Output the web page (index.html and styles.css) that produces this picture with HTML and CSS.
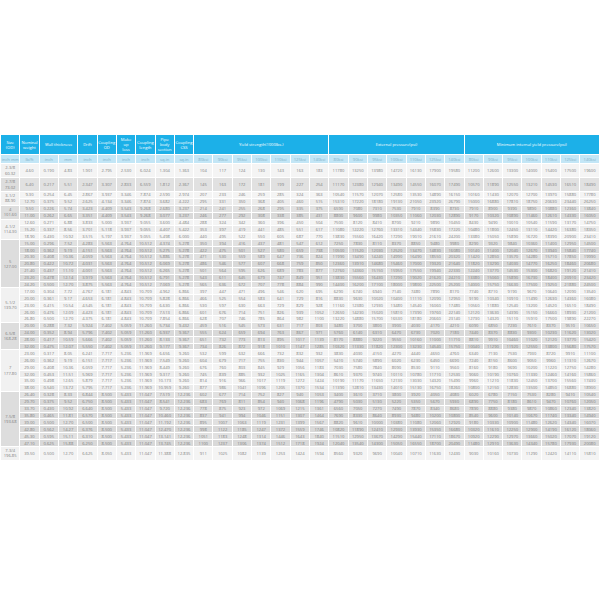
FILE: index.html
```html
<!DOCTYPE html>
<html lang="en">
<head>
<meta charset="utf-8">
<title>Tubing and casing specification</title>
<link rel="stylesheet" href="styles.css">
</head>
<body>
<div class="page">
<table class="spec">
<colgroup><col span="31"></colgroup>
<thead>
<tr class="h1">
<th>Size<br>(OD)</th><th>Nominal<br>weight</th><th colspan="2">Wall thickness</th><th>Drift</th><th>Coupling<br>OD</th><th>Make<br>up<br>loss</th><th>Coupling<br>length</th><th>Pipe<br>body<br>section</th><th>Coupling<br>CSS</th><th colspan="7">Yield strength(1000lbs.)</th><th colspan="7">External pressure(psi)</th><th colspan="7">Minimum internal yield pressure(psi)</th>
</tr>
<tr class="h2">
<th>inch mm</th><th>lb/ft</th><th>inch</th><th>mm</th><th>inch</th><th>inch</th><th>inch</th><th>inch</th><th>sq.in</th><th>sq.in</th><th>80ksi</th><th>90ksi</th><th>95ksi</th><th>100ksi</th><th>110ksi</th><th>125ksi</th><th>140ksi</th><th>80ksi</th><th>90ksi</th><th>95ksi</th><th>100ksi</th><th>110ksi</th><th>125ksi</th><th>140ksi</th><th>80ksi</th><th>90ksi</th><th>95ksi</th><th>100ksi</th><th>110ksi</th><th>125ksi</th><th>140ksi</th>
</tr>
</thead>
<tbody class="ga">
<tr class="tall"><td class="size">2-3/8<br>60.32</td><td>4.60</td><td>0.190</td><td>4.83</td><td>1.901</td><td>2.795</td><td>2.530</td><td>6.024</td><td>1.304</td><td>1.363</td><td>104</td><td>117</td><td>124</td><td>130</td><td>143</td><td>163</td><td>183</td><td>11780</td><td>13250</td><td>13980</td><td>14720</td><td>16130</td><td>17900</td><td>19580</td><td>11200</td><td>12600</td><td>13300</td><td>14000</td><td>15400</td><td>17500</td><td>19600</td></tr>
</tbody>
<tbody class="gb">
<tr class="tall"><td class="size">2-7/8<br>73.02</td><td>6.40</td><td>0.217</td><td>5.51</td><td>2.347</td><td>3.307</td><td>2.833</td><td>6.559</td><td>1.812</td><td>2.367</td><td>145</td><td>163</td><td>172</td><td>181</td><td>199</td><td>227</td><td>254</td><td>11170</td><td>12380</td><td>12940</td><td>13490</td><td>14550</td><td>16070</td><td>17490</td><td>10570</td><td>11890</td><td>12550</td><td>13210</td><td>14530</td><td>16510</td><td>18490</td></tr>
</tbody>
<tbody class="ga">
<tr><td class="size" rowspan="2">3-1/2<br>88.90</td><td>9.30</td><td>0.254</td><td>6.45</td><td>2.867</td><td>3.937</td><td>3.346</td><td>7.874</td><td>2.590</td><td>2.974</td><td>207</td><td>233</td><td>246</td><td>259</td><td>285</td><td>324</td><td>363</td><td>10540</td><td>11570</td><td>12070</td><td>12580</td><td>13530</td><td>14890</td><td>16150</td><td>10160</td><td>11430</td><td>12070</td><td>12700</td><td>13970</td><td>15880</td><td>17780</td></tr>
<tr><td>12.70</td><td>0.375</td><td>9.52</td><td>2.625</td><td>4.134</td><td>3.346</td><td>7.874</td><td>3.682</td><td>4.222</td><td>295</td><td>331</td><td>350</td><td>368</td><td>405</td><td>460</td><td>515</td><td>15310</td><td>17220</td><td>18180</td><td>19130</td><td>21050</td><td>23920</td><td>26790</td><td>15000</td><td>16880</td><td>17810</td><td>18750</td><td>20630</td><td>23440</td><td>26250</td></tr>
</tbody>
<tbody class="gb">
<tr><td class="size" rowspan="2">4<br>101.60</td><td>9.50</td><td>0.226</td><td>5.74</td><td>3.423</td><td>4.409</td><td>3.543</td><td>9.268</td><td>2.680</td><td>3.237</td><td>214</td><td>241</td><td>255</td><td>268</td><td>295</td><td>335</td><td>375</td><td>6590</td><td>7080</td><td>7310</td><td>7530</td><td>7910</td><td>8390</td><td>8730</td><td>7910</td><td>8900</td><td>9390</td><td>9890</td><td>10880</td><td>12360</td><td>13840</td></tr>
<tr><td>11.00</td><td>0.262</td><td>6.65</td><td>3.351</td><td>4.409</td><td>3.543</td><td>9.268</td><td>3.077</td><td>3.237</td><td>246</td><td>277</td><td>292</td><td>308</td><td>338</td><td>385</td><td>431</td><td>8800</td><td>9600</td><td>9980</td><td>10350</td><td>11060</td><td>12030</td><td>12890</td><td>9170</td><td>10320</td><td>10890</td><td>11460</td><td>12610</td><td>14330</td><td>16050</td></tr>
</tbody>
<tbody class="ga">
<tr><td class="size" rowspan="3">4-1/2<br>114.30</td><td>12.60</td><td>0.271</td><td>6.88</td><td>3.833</td><td>5.000</td><td>3.937</td><td>9.055</td><td>3.600</td><td>4.484</td><td>288</td><td>324</td><td>342</td><td>360</td><td>396</td><td>450</td><td>504</td><td>7500</td><td>8120</td><td>8410</td><td>8700</td><td>9210</td><td>9890</td><td>10450</td><td>8430</td><td>9490</td><td>10010</td><td>10540</td><td>11590</td><td>13170</td><td>14750</td></tr>
<tr><td>15.20</td><td>0.337</td><td>8.56</td><td>3.701</td><td>5.118</td><td>3.937</td><td>9.055</td><td>4.407</td><td>5.422</td><td>353</td><td>397</td><td>419</td><td>441</td><td>485</td><td>551</td><td>617</td><td>11080</td><td>12220</td><td>12760</td><td>13310</td><td>14340</td><td>15830</td><td>17220</td><td>10480</td><td>11800</td><td>12450</td><td>13110</td><td>14420</td><td>16380</td><td>18350</td></tr>
<tr><td>18.90</td><td>0.430</td><td>10.92</td><td>3.515</td><td>5.197</td><td>3.937</td><td>9.055</td><td>5.498</td><td>6.000</td><td>440</td><td>495</td><td>522</td><td>550</td><td>605</td><td>687</td><td>770</td><td>13830</td><td>15560</td><td>16420</td><td>17290</td><td>19010</td><td>21610</td><td>24200</td><td>13380</td><td>15050</td><td>15890</td><td>16720</td><td>18390</td><td>20900</td><td>23410</td></tr>
</tbody>
<tbody class="gb">
<tr><td class="size" rowspan="7">5<br>127.00</td><td>15.00</td><td>0.296</td><td>7.52</td><td>4.283</td><td>5.563</td><td>4.764</td><td>10.512</td><td>4.374</td><td>5.278</td><td>350</td><td>394</td><td>416</td><td>437</td><td>481</td><td>547</td><td>612</td><td>7250</td><td>7830</td><td>8110</td><td>8370</td><td>8850</td><td>9480</td><td>9980</td><td>8290</td><td>9320</td><td>9840</td><td>10360</td><td>11400</td><td>12950</td><td>14500</td></tr>
<tr><td>18.00</td><td>0.362</td><td>9.19</td><td>4.151</td><td>5.563</td><td>4.764</td><td>10.512</td><td>5.275</td><td>5.278</td><td>422</td><td>475</td><td>501</td><td>527</td><td>580</td><td>659</td><td>738</td><td>10500</td><td>11520</td><td>12030</td><td>12520</td><td>13470</td><td>14830</td><td>16080</td><td>10140</td><td>11400</td><td>12040</td><td>12670</td><td>13940</td><td>15840</td><td>17740</td></tr>
<tr><td>20.30</td><td>0.408</td><td>10.36</td><td>4.059</td><td>5.563</td><td>4.764</td><td>10.512</td><td>5.886</td><td>5.278</td><td>471</td><td>530</td><td>559</td><td>589</td><td>647</td><td>736</td><td>824</td><td>11990</td><td>13490</td><td>14240</td><td>14990</td><td>16490</td><td>18550</td><td>20320</td><td>11420</td><td>12850</td><td>13570</td><td>14280</td><td>15710</td><td>17850</td><td>19990</td></tr>
<tr><td>20.80</td><td>0.422</td><td>10.72</td><td>4.031</td><td>5.563</td><td>4.764</td><td>10.512</td><td>6.069</td><td>5.278</td><td>486</td><td>546</td><td>577</td><td>607</td><td>668</td><td>759</td><td>850</td><td>12360</td><td>13910</td><td>14680</td><td>15460</td><td>17000</td><td>19320</td><td>21640</td><td>11820</td><td>13290</td><td>14030</td><td>14770</td><td>16250</td><td>18460</td><td>20680</td></tr>
<tr><td>21.40</td><td>0.437</td><td>11.10</td><td>4.001</td><td>5.563</td><td>4.764</td><td>10.512</td><td>6.265</td><td>5.278</td><td>501</td><td>564</td><td>595</td><td>626</td><td>689</td><td>783</td><td>877</td><td>12760</td><td>14360</td><td>15150</td><td>15950</td><td>17550</td><td>19940</td><td>22330</td><td>12240</td><td>13770</td><td>14530</td><td>15300</td><td>16820</td><td>19120</td><td>21410</td></tr>
<tr><td>23.20</td><td>0.478</td><td>12.14</td><td>3.919</td><td>5.563</td><td>4.764</td><td>10.512</td><td>6.791</td><td>5.278</td><td>543</td><td>611</td><td>645</td><td>679</td><td>747</td><td>849</td><td>951</td><td>13830</td><td>15560</td><td>16430</td><td>17290</td><td>19020</td><td>21620</td><td>24210</td><td>13380</td><td>15060</td><td>15890</td><td>16730</td><td>18400</td><td>20910</td><td>23420</td></tr>
<tr><td>24.20</td><td>0.500</td><td>12.70</td><td>3.875</td><td>5.563</td><td>4.764</td><td>10.512</td><td>7.069</td><td>5.278</td><td>565</td><td>636</td><td>672</td><td>707</td><td>778</td><td>884</td><td>990</td><td>14400</td><td>16200</td><td>17100</td><td>18000</td><td>19800</td><td>22500</td><td>25200</td><td>14000</td><td>15750</td><td>16630</td><td>17500</td><td>19250</td><td>21880</td><td>24500</td></tr>
</tbody>
<tbody class="ga">
<tr><td class="size" rowspan="5">5-1/2<br>139.70</td><td>17.00</td><td>0.304</td><td>7.72</td><td>4.767</td><td>6.181</td><td>4.843</td><td>10.709</td><td>4.962</td><td>6.866</td><td>397</td><td>447</td><td>471</td><td>496</td><td>546</td><td>620</td><td>695</td><td>6290</td><td>6740</td><td>6940</td><td>7140</td><td>7480</td><td>7890</td><td>8170</td><td>7740</td><td>8710</td><td>9190</td><td>9670</td><td>10640</td><td>12090</td><td>13540</td></tr>
<tr><td>20.00</td><td>0.361</td><td>9.17</td><td>4.653</td><td>6.181</td><td>4.843</td><td>10.709</td><td>5.828</td><td>6.866</td><td>466</td><td>525</td><td>554</td><td>583</td><td>641</td><td>729</td><td>816</td><td>8830</td><td>9630</td><td>10020</td><td>10400</td><td>11110</td><td>12090</td><td>12950</td><td>9190</td><td>10340</td><td>10910</td><td>11490</td><td>12630</td><td>14360</td><td>16080</td></tr>
<tr><td>23.00</td><td>0.415</td><td>10.54</td><td>4.545</td><td>6.181</td><td>4.843</td><td>10.709</td><td>6.630</td><td>6.866</td><td>530</td><td>597</td><td>630</td><td>663</td><td>729</td><td>829</td><td>928</td><td>11160</td><td>12380</td><td>12930</td><td>13480</td><td>14540</td><td>16060</td><td>17480</td><td>10560</td><td>11880</td><td>12540</td><td>13200</td><td>14520</td><td>16510</td><td>18490</td></tr>
<tr><td>26.00</td><td>0.476</td><td>12.09</td><td>4.423</td><td>6.181</td><td>4.843</td><td>10.709</td><td>7.513</td><td>6.866</td><td>601</td><td>676</td><td>714</td><td>751</td><td>826</td><td>939</td><td>1052</td><td>12650</td><td>14230</td><td>15020</td><td>15810</td><td>17390</td><td>19760</td><td>22140</td><td>12120</td><td>13630</td><td>14390</td><td>15150</td><td>16660</td><td>18930</td><td>21200</td></tr>
<tr><td>26.80</td><td>0.500</td><td>12.70</td><td>4.375</td><td>6.181</td><td>4.843</td><td>10.709</td><td>7.854</td><td>6.866</td><td>628</td><td>707</td><td>746</td><td>785</td><td>864</td><td>982</td><td>1100</td><td>13220</td><td>14880</td><td>15700</td><td>16530</td><td>18180</td><td>20660</td><td>23140</td><td>12730</td><td>14320</td><td>15110</td><td>15910</td><td>17500</td><td>19890</td><td>22270</td></tr>
</tbody>
<tbody class="gb">
<tr><td class="size" rowspan="4">6-5/8<br>168.28</td><td>20.00</td><td>0.288</td><td>7.32</td><td>5.924</td><td>7.402</td><td>5.059</td><td>11.260</td><td>5.734</td><td>9.432</td><td>459</td><td>516</td><td>545</td><td>573</td><td>631</td><td>717</td><td>803</td><td>3480</td><td>3700</td><td>3800</td><td>3900</td><td>4030</td><td>4170</td><td>4210</td><td>6090</td><td>6850</td><td>7230</td><td>7610</td><td>8370</td><td>9510</td><td>10650</td></tr>
<tr><td>24.00</td><td>0.352</td><td>8.94</td><td>5.796</td><td>7.402</td><td>5.059</td><td>11.260</td><td>6.937</td><td>9.367</td><td>555</td><td>624</td><td>659</td><td>694</td><td>763</td><td>867</td><td>971</td><td>5760</td><td>6140</td><td>6310</td><td>6470</td><td>6730</td><td>7020</td><td>7180</td><td>7440</td><td>8370</td><td>8830</td><td>9300</td><td>10230</td><td>11620</td><td>13020</td></tr>
<tr><td>28.00</td><td>0.417</td><td>10.59</td><td>5.666</td><td>7.402</td><td>5.059</td><td>11.260</td><td>8.133</td><td>9.367</td><td>651</td><td>732</td><td>773</td><td>813</td><td>895</td><td>1017</td><td>1139</td><td>8170</td><td>8880</td><td>9220</td><td>9550</td><td>10160</td><td>11000</td><td>11710</td><td>8810</td><td>9910</td><td>10460</td><td>11020</td><td>12120</td><td>13770</td><td>15420</td></tr>
<tr><td>32.00</td><td>0.475</td><td>12.07</td><td>5.550</td><td>7.402</td><td>5.059</td><td>11.260</td><td>9.177</td><td>9.367</td><td>734</td><td>826</td><td>872</td><td>918</td><td>1010</td><td>1147</td><td>1285</td><td>10320</td><td>11330</td><td>11820</td><td>12300</td><td>13230</td><td>14540</td><td>15750</td><td>10040</td><td>11290</td><td>11920</td><td>12550</td><td>13800</td><td>15680</td><td>17570</td></tr>
</tbody>
<tbody class="ga">
<tr><td class="size" rowspan="6">7<br>177.80</td><td>23.00</td><td>0.317</td><td>8.05</td><td>6.241</td><td>7.717</td><td>5.236</td><td>11.969</td><td>6.656</td><td>9.260</td><td>532</td><td>599</td><td>632</td><td>666</td><td>732</td><td>832</td><td>932</td><td>3830</td><td>4030</td><td>4150</td><td>4270</td><td>4440</td><td>4650</td><td>4760</td><td>6340</td><td>7130</td><td>7530</td><td>7930</td><td>8720</td><td>9910</td><td>11100</td></tr>
<tr><td>26.00</td><td>0.362</td><td>9.19</td><td>6.151</td><td>7.717</td><td>5.236</td><td>11.969</td><td>7.549</td><td>9.260</td><td>604</td><td>679</td><td>717</td><td>755</td><td>830</td><td>944</td><td>1057</td><td>5410</td><td>5740</td><td>5890</td><td>6020</td><td>6230</td><td>6450</td><td>6690</td><td>7240</td><td>8150</td><td>8600</td><td>9050</td><td>9960</td><td>11310</td><td>12670</td></tr>
<tr><td>29.00</td><td>0.408</td><td>10.36</td><td>6.059</td><td>7.717</td><td>5.236</td><td>11.969</td><td>8.449</td><td>9.260</td><td>676</td><td>760</td><td>803</td><td>845</td><td>929</td><td>1056</td><td>1183</td><td>7030</td><td>7580</td><td>7840</td><td>8090</td><td>8530</td><td>9110</td><td>9560</td><td>8160</td><td>9180</td><td>9690</td><td>10200</td><td>11220</td><td>12750</td><td>14280</td></tr>
<tr><td>32.00</td><td>0.453</td><td>11.51</td><td>5.969</td><td>7.717</td><td>5.236</td><td>11.969</td><td>9.317</td><td>9.260</td><td>745</td><td>839</td><td>885</td><td>932</td><td>1025</td><td>1165</td><td>1304</td><td>8610</td><td>9370</td><td>9740</td><td>10110</td><td>10780</td><td>11710</td><td>12530</td><td>9060</td><td>10190</td><td>10760</td><td>11330</td><td>12460</td><td>14160</td><td>15860</td></tr>
<tr><td>35.00</td><td>0.498</td><td>12.65</td><td>5.879</td><td>7.717</td><td>5.236</td><td>11.969</td><td>10.173</td><td>9.260</td><td>814</td><td>916</td><td>966</td><td>1017</td><td>1119</td><td>1272</td><td>1424</td><td>10190</td><td>11170</td><td>11650</td><td>12130</td><td>13030</td><td>14320</td><td>15490</td><td>9960</td><td>11210</td><td>11830</td><td>12450</td><td>13700</td><td>15560</td><td>17430</td></tr>
<tr><td>38.00</td><td>0.540</td><td>13.72</td><td>5.795</td><td>7.717</td><td>5.236</td><td>11.969</td><td>10.959</td><td>9.260</td><td>877</td><td>986</td><td>1041</td><td>1096</td><td>1205</td><td>1370</td><td>1534</td><td>11390</td><td>12810</td><td>13430</td><td>14010</td><td>15130</td><td>16750</td><td>18260</td><td>10800</td><td>12150</td><td>12830</td><td>13500</td><td>14850</td><td>16880</td><td>18900</td></tr>
</tbody>
<tbody class="gb">
<tr><td class="size" rowspan="8">7-5/8<br>193.68</td><td>26.40</td><td>0.328</td><td>8.33</td><td>6.844</td><td>8.500</td><td>5.433</td><td>11.047</td><td>7.519</td><td>12.236</td><td>602</td><td>677</td><td>714</td><td>752</td><td>827</td><td>940</td><td>1053</td><td>3400</td><td>3610</td><td>3710</td><td>3800</td><td>3920</td><td>4050</td><td>4080</td><td>6020</td><td>6780</td><td>7150</td><td>7530</td><td>8280</td><td>9410</td><td>10540</td></tr>
<tr><td>29.70</td><td>0.375</td><td>9.52</td><td>6.750</td><td>8.500</td><td>5.433</td><td>11.047</td><td>8.541</td><td>12.236</td><td>683</td><td>769</td><td>811</td><td>854</td><td>940</td><td>1068</td><td>1196</td><td>4790</td><td>5030</td><td>5130</td><td>5220</td><td>5350</td><td>5670</td><td>5930</td><td>6890</td><td>7750</td><td>8180</td><td>8610</td><td>9470</td><td>10760</td><td>12050</td></tr>
<tr><td>33.70</td><td>0.430</td><td>10.92</td><td>6.640</td><td>8.500</td><td>5.433</td><td>11.047</td><td>9.720</td><td>12.236</td><td>778</td><td>875</td><td>923</td><td>972</td><td>1069</td><td>1215</td><td>1361</td><td>6560</td><td>7050</td><td>7270</td><td>7490</td><td>7870</td><td>8340</td><td>8680</td><td>7890</td><td>8880</td><td>9380</td><td>9870</td><td>10860</td><td>12340</td><td>13820</td></tr>
<tr><td>35.80</td><td>0.465</td><td>11.81</td><td>6.570</td><td>8.500</td><td>5.433</td><td>11.047</td><td>10.460</td><td>12.236</td><td>837</td><td>941</td><td>994</td><td>1046</td><td>1151</td><td>1307</td><td>1464</td><td>7690</td><td>8330</td><td>8640</td><td>8930</td><td>9480</td><td>10200</td><td>10800</td><td>8540</td><td>9600</td><td>10140</td><td>10670</td><td>11740</td><td>13340</td><td>14940</td></tr>
<tr><td>39.00</td><td>0.500</td><td>12.70</td><td>6.500</td><td>8.500</td><td>5.433</td><td>11.047</td><td>11.192</td><td>12.236</td><td>895</td><td>1007</td><td>1063</td><td>1119</td><td>1231</td><td>1399</td><td>1567</td><td>8820</td><td>9610</td><td>10000</td><td>10380</td><td>11080</td><td>12060</td><td>12920</td><td>9180</td><td>10330</td><td>10900</td><td>11480</td><td>12620</td><td>14340</td><td>16070</td></tr>
<tr><td>42.80</td><td>0.562</td><td>14.27</td><td>6.376</td><td>8.500</td><td>5.433</td><td>11.047</td><td>12.470</td><td>12.236</td><td>998</td><td>1122</td><td>1185</td><td>1247</td><td>1372</td><td>1559</td><td>1746</td><td>10820</td><td>11890</td><td>12410</td><td>12930</td><td>13930</td><td>15350</td><td>16680</td><td>10320</td><td>11610</td><td>12250</td><td>12900</td><td>14190</td><td>16120</td><td>18060</td></tr>
<tr><td>45.30</td><td>0.595</td><td>15.11</td><td>6.310</td><td>8.500</td><td>5.433</td><td>11.047</td><td>13.141</td><td>12.236</td><td>1051</td><td>1183</td><td>1248</td><td>1314</td><td>1446</td><td>1643</td><td>1840</td><td>11510</td><td>12950</td><td>13670</td><td>14290</td><td>15440</td><td>17110</td><td>18670</td><td>10920</td><td>12290</td><td>12970</td><td>13660</td><td>15020</td><td>17070</td><td>19120</td></tr>
<tr><td>47.10</td><td>0.625</td><td>15.88</td><td>6.250</td><td>8.500</td><td>5.433</td><td>11.047</td><td>13.745</td><td>12.236</td><td>1100</td><td>1237</td><td>1306</td><td>1374</td><td>1512</td><td>1718</td><td>1924</td><td>12040</td><td>13540</td><td>14300</td><td>15050</td><td>16550</td><td>18700</td><td>20490</td><td>11480</td><td>12910</td><td>13630</td><td>14340</td><td>15780</td><td>17930</td><td>20080</td></tr>
</tbody>
<tbody class="ga">
<tr class="tall"><td class="size">7-3/4<br>196.85</td><td>39.50</td><td>0.500</td><td>12.70</td><td>6.625</td><td>8.050</td><td>5.433</td><td>11.047</td><td>11.388</td><td>12.835</td><td>911</td><td>1025</td><td>1082</td><td>1139</td><td>1253</td><td>1424</td><td>1594</td><td>8560</td><td>9320</td><td>9690</td><td>10040</td><td>10710</td><td>11630</td><td>12430</td><td>9030</td><td>10160</td><td>10730</td><td>11290</td><td>12420</td><td>14110</td><td>15810</td></tr>
</tbody>
</table>
</div>
</body>
</html>
```

FILE: styles.css
```css
body {
  margin: 0;
  background: #ffffff;
  font-family: "Open Sans", "Noto Sans", "Liberation Sans", sans-serif;
}

.page {
  padding-top: 134px;
}

.spec {
  width: 600px;
  table-layout: fixed;
  border-collapse: collapse;
  font-size: 4.1px;
  color: #808080;
  text-align: center;
}

.spec th,
.spec td {
  border: 1px solid #ffffff;
  padding: 0;
  overflow: hidden;
  white-space: nowrap;
  vertical-align: middle;
}

.spec .h1 th {
  height: 19px;
  background: #1cb0e8;
  color: #ffffff;
  font-weight: 400;
  line-height: 5px;
  white-space: normal;
}

.spec .h2 th {
  height: 8px;
  background: #c3e6f6;
  color: #7fb0c8;
  font-weight: 400;
  line-height: 7px;
}

.spec td {
  height: 5.9px;
  line-height: 5px;
}

.spec .tall td {
  height: 13px;
}

.spec td.size {
  line-height: 5.2px;
  white-space: normal;
}

.ga td { background: #f4f4f4; }
.ga tr:nth-child(even) td { background: #ececec; }
.gb td { background: #e1e1e1; }
.gb tr:nth-child(even) td { background: #d9d9d9; }
.ga td.size { background: #f1f1f1; }
.gb td.size { background: #dddddd; }
```
